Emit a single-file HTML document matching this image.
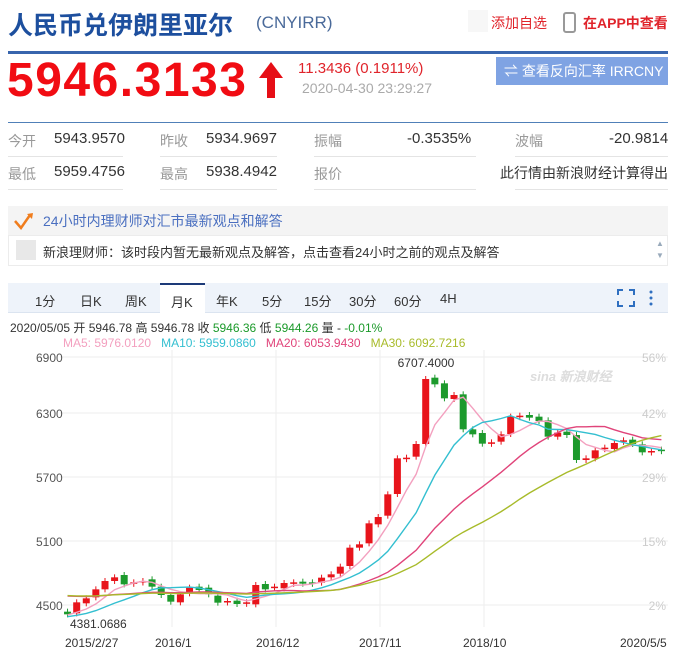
<!DOCTYPE html>
<html><head><meta charset="utf-8"><style>
*{margin:0;padding:0;box-sizing:border-box}
body{width:675px;height:651px;background:#fff;font-family:"Liberation Sans","Noto Sans CJK SC",sans-serif;position:relative;overflow:hidden}
.a{position:absolute;white-space:nowrap}
.lbl{color:#999;font-size:14px}
.val{color:#333;font-size:15px}
.ln{position:absolute;height:1px;background:#e4e4e4}
</style></head><body>
<div class="a" style="left:8px;top:6px;font-size:25px;font-weight:bold;color:#1d4f9e">人民币兑伊朗里亚尔</div>
<div class="a" style="left:256px;top:13px;font-size:17px;color:#4a6a9a">(CNYIRR)</div>
<div class="a" style="left:468px;top:10px;width:20px;height:22px;background:#f7f7f7"></div>
<div class="a" style="left:491px;top:13px;font-size:14px;color:#e0242b">添加自选</div>
<div class="a" style="left:563px;top:12px;width:13px;height:21px;border:2px solid #999;border-radius:3px"></div>
<div class="a" style="left:583px;top:13px;font-size:14px;color:#e0242b;font-weight:bold">在APP中查看</div>
<div class="a" style="left:8px;top:51px;width:660px;height:3px;background:#3865ad"></div>
<div class="a" style="left:7px;top:53px;font-size:48px;font-weight:bold;color:#f10c13;letter-spacing:1.5px">5946.3133</div>
<svg class="a" style="left:256px;top:60px" width="30" height="40"><path d="M15 2 L27 18 L19 18 L19 38 L11 38 L11 18 L3 18Z" fill="#e60e16"/></svg>
<div class="a" style="left:298px;top:60px;font-size:15px;color:#e0242b">11.3436 (0.1911%)</div>
<div class="a" style="left:302px;top:80px;font-size:14px;color:#aaa">2020-04-30 23:29:27</div>
<div class="a" style="left:496px;top:57px;width:172px;height:28px;background:#7fa3e3;color:#fff;font-size:14px;line-height:28px;padding-left:8px">⇌ 查看反向汇率 IRRCNY</div>
<div class="a" style="left:8px;top:122px;width:660px;height:1px;background:#5080b8"></div>
<div class="a lbl" style="left:8px;top:131px">今开</div><div class="a val" style="left:54px;top:130px">5943.9570</div>
<div class="a lbl" style="left:160px;top:131px">昨收</div><div class="a val" style="left:206px;top:130px">5934.9697</div>
<div class="a lbl" style="left:314px;top:131px">振幅</div><div class="a val" style="left:407px;top:130px">-0.3535%</div>
<div class="a lbl" style="left:515px;top:131px">波幅</div><div class="a val" style="left:609px;top:130px">-20.9814</div>
<div class="ln" style="left:8px;top:156px;width:115px"></div><div class="ln" style="left:160px;top:156px;width:117px"></div><div class="ln" style="left:314px;top:156px;width:162px"></div><div class="ln" style="left:515px;top:156px;width:153px"></div>
<div class="a lbl" style="left:8px;top:164px">最低</div><div class="a val" style="left:54px;top:163px">5959.4756</div>
<div class="a lbl" style="left:160px;top:164px">最高</div><div class="a val" style="left:206px;top:163px">5938.4942</div>
<div class="a lbl" style="left:314px;top:164px">报价</div><div class="a val" style="left:500px;top:163px;font-size:14px">此行情由新浪财经计算得出</div>
<div class="ln" style="left:8px;top:189px;width:115px"></div><div class="ln" style="left:160px;top:189px;width:117px"></div><div class="ln" style="left:314px;top:189px;width:162px"></div><div class="ln" style="left:515px;top:189px;width:153px"></div>
<div class="a" style="left:8px;top:206px;width:660px;height:40px;background:#f4f4f4"></div>
<svg class="a" style="left:13px;top:211px" width="22" height="20"><path d="M2 10 L8 17 L17 4" stroke="#f07d1d" stroke-width="2.5" fill="none"/><path d="M14 3 L20 2 L19 8Z" fill="#f07d1d"/></svg>
<div class="a" style="left:43px;top:211px;font-size:14px;color:#4a6fc0">24小时内理财师对汇市最新观点和解答</div>
<div class="a" style="left:8px;top:235px;width:660px;height:31px;border:1px solid #ececec;background:#fff"></div>
<div class="a" style="left:16px;top:240px;width:20px;height:20px;background:#e8e8e8"></div>
<div class="a" style="left:43px;top:242px;font-size:13px;color:#333">新浪理财师：该时段内暂无最新观点及解答，点击查看24小时之前的观点及解答</div>
<div class="a" style="left:656px;top:239px;font-size:8px;color:#9ab">▲</div><div class="a" style="left:656px;top:251px;font-size:8px;color:#9ab">▼</div>
<div class="a" style="left:8px;top:283px;width:660px;height:30px;background:#eef3fa;border-bottom:1px solid #dbe4f0"></div>
<div class="a" style="left:160px;top:283px;width:45px;height:31px;background:#fff;border-top:2px solid #1d3a78"></div>
<div class="a" style="left:35px;top:291px;font-size:13px;color:#333">1分</div>
<div class="a" style="left:80px;top:291px;font-size:13px;color:#333">日K</div>
<div class="a" style="left:125px;top:291px;font-size:13px;color:#333">周K</div>
<div class="a" style="left:171px;top:292px;font-size:13px;color:#333">月K</div>
<div class="a" style="left:216px;top:291px;font-size:13px;color:#333">年K</div>
<div class="a" style="left:262px;top:291px;font-size:13px;color:#333">5分</div>
<div class="a" style="left:304px;top:291px;font-size:13px;color:#333">15分</div>
<div class="a" style="left:349px;top:291px;font-size:13px;color:#333">30分</div>
<div class="a" style="left:394px;top:291px;font-size:13px;color:#333">60分</div>
<div class="a" style="left:440px;top:291px;font-size:13px;color:#333">4H</div>
<svg class="a" style="left:617px;top:289px" width="40" height="18"><path d="M1 6V1H6M12 1H17V6M17 12V17H12M6 17H1V12" stroke="#2f6fc0" stroke-width="2" fill="none"/><circle cx="34" cy="3" r="1.5" fill="#2f6fc0"/><circle cx="34" cy="9" r="1.5" fill="#2f6fc0"/><circle cx="34" cy="15" r="1.5" fill="#2f6fc0"/></svg>
<div class="a" style="left:10px;top:319px;font-size:12px;color:#333">2020/05/05 开 5946.78 高 5946.78 收 <span style="color:#1b9a2a">5946.36</span> 低 <span style="color:#1b9a2a">5944.26</span> 量 - <span style="color:#1b9a2a">-0.01%</span></div>
<div class="a" style="left:63px;top:336px;font-size:12px"><span style="color:#f3a0bf">MA5: 5976.0120</span>&nbsp;&nbsp; <span style="color:#33bfd0">MA10: 5959.0860</span>&nbsp;&nbsp; <span style="color:#e0447a">MA20: 6053.9430</span>&nbsp;&nbsp; <span style="color:#a8bb2a">MA30: 6092.7216</span></div>
<svg id="ch" class="a" style="left:0;top:345px" width="675" height="306"></svg>
<script>
var s=document.getElementById('ch'),h='';
var gy=[357,413,477,541,605],gl=['6900','6300','5700','5100','4500'],pr=['56%','42%','29%','15%','2%'];
for(var i=0;i<5;i++){var y=gy[i]-345;h+='<line x1="60" x2="668" y1="'+y+'" y2="'+y+'" stroke="#eee"/>';h+='<text x="36" y="'+(y+5)+'" font-size="12" fill="#555" font-family="Liberation Sans">'+gl[i]+'</text><text x="666" y="'+(y+5)+'" font-size="12" fill="#ccc" text-anchor="end" font-family="Liberation Sans">'+pr[i]+'</text>';}
[172,276,380,484].forEach(function(x){h+='<line x1="'+x+'" x2="'+x+'" y1="5" y2="282" stroke="#eee"/>'});
var d=[[155,800,808],[176,805,772],[198,775,760],[220,757,733],[241,733,708],[263,708,697],[285,690,718],[307,716,712],[328,712,708],[349,703,725],[370,725,750],[392,750,770],[414,772,748],[435,745,728],[457,725,735],[479,728,748],[500,752,773],[522,772,768],[544,767,777],[566,776,772],[587,778,720],[609,717,733],[630,728,725],[652,730,714],[674,714,712],[695,710,716],[717,712,716],[738,713,698],[760,697,688],[781,686,665],[803,663,608],[825,608,598],[847,595,535],[868,538,516],[890,512,448],[912,447,340],[933,342,338],[955,335,297],[977,297,102],[998,98,118],[1020,115,160],[1042,162,150],[1063,148,253],[1085,253,268],[1107,264,296],[1128,296,292],[1150,290,268],[1172,267,215],[1193,214,212],[1215,210,218],[1237,215,228],[1258,226,275],[1280,275,263],[1301,260,270],[1323,270,345],[1345,345,340],[1366,340,316],[1388,312,308],[1410,312,294],[1431,290,286],[1452,284,297],[1474,298,322],[1495,322,318],[1518,314,318]];
var cl=[];
d.forEach(function(c){var x=c[0]/2.295,o=c[1]/3,k=c[2]/3;var up=k<=o;var col=up?'#e8141b':'#1c9a2c';var t=Math.min(o,k),b=Math.max(o,k);if(b-t<1.5)b=t+1.5;
h+='<line x1="'+x+'" x2="'+x+'" y1="'+(t-3)+'" y2="'+(b+3)+'" stroke="'+col+'"/><rect x="'+(x-3.5)+'" y="'+t+'" width="7" height="'+(b-t)+'" fill="'+col+'"/>';cl.push([x,k]);});
function ma(n,col,pre){var p='';for(var i=0;i<cl.length;i++){var sm=0,c=0;for(var j=Math.max(0,i-n+1);j<=i;j++){sm+=cl[j][1];c++}var pad=n-c;sm+=pad*pre;p+=(i?'L':'M')+cl[i][0].toFixed(1)+' '+(sm/n).toFixed(1)}h+='<path d="'+p+'" stroke="'+col+'" stroke-width="1.4" fill="none"/>'}
ma(5,'#f3a0bf',270);ma(10,'#33bfd0',272);ma(20,'#e0447a',250);ma(30,'#a8bb2a',250);
h+='<text x="426" y="22" font-size="12" fill="#333" text-anchor="middle" font-family="Liberation Sans">6707.4000</text>';
h+='<text x="70" y="283" font-size="12" fill="#333" font-family="Liberation Sans">4381.0686</text>';
h+='<text x="530" y="36" font-size="13" fill="#ddd" font-style="italic" font-weight="bold" font-family="Liberation Sans">sina 新浪财经</text>';
[['2015/2/27',65],['2016/1',155],['2016/12',256],['2017/11',359],['2018/10',463],['2020/5/5',620]].forEach(function(l){h+='<text x="'+l[1]+'" y="302" font-size="12" fill="#333" font-family="Liberation Sans">'+l[0]+'</text>'});
s.innerHTML=h;
</script>
</body></html>
